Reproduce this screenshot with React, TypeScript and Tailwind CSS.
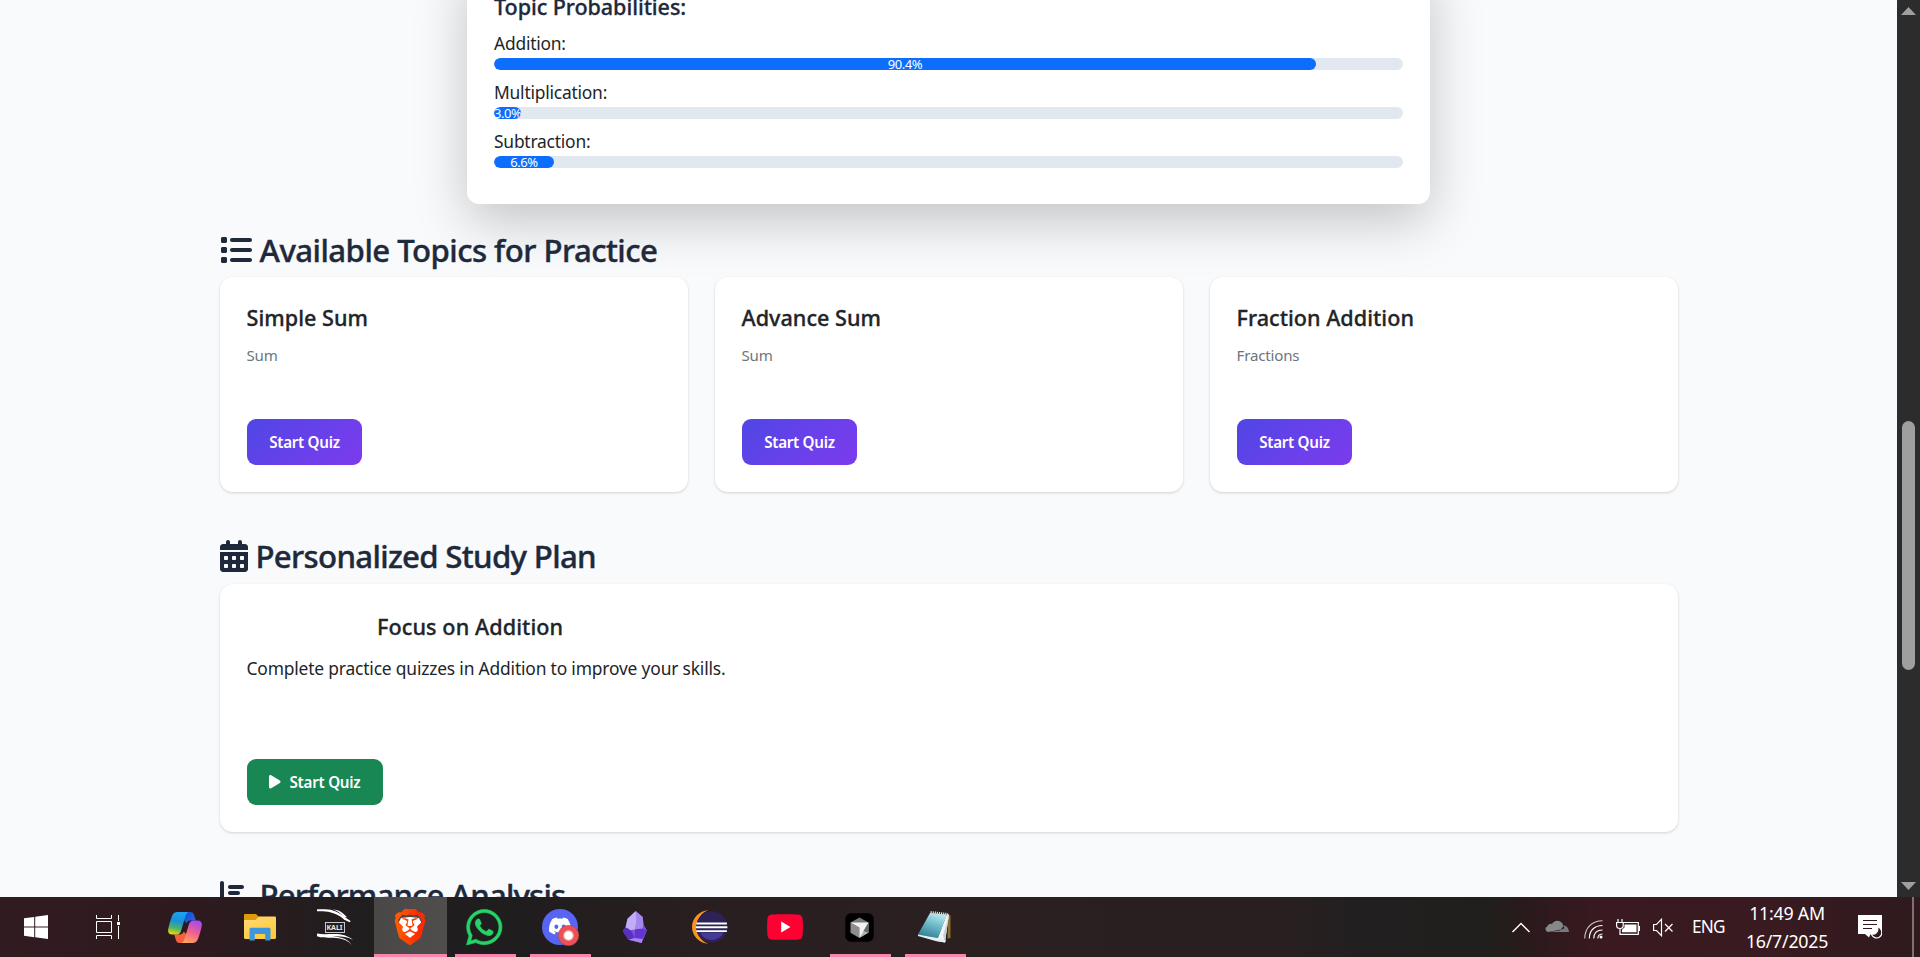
import type { ReactNode } from "react";
import { SiBrave, SiDiscord } from "react-icons/si";
import {
  FaCalendarDays,
  FaChartBar,
  FaList,
  FaPlay,
  FaWhatsapp,
} from "react-icons/fa6";

const probabilities = [
  { label: "Addition:", value: 90.4 },
  { label: "Multiplication:", value: 3.0 },
  { label: "Subtraction:", value: 6.6 },
];

const topics = [
  { title: "Simple Sum", subject: "Sum" },
  { title: "Advance Sum", subject: "Sum" },
  { title: "Fraction Addition", subject: "Fractions" },
];

function SectionHeading({ icon, children, className = "" }: { icon: ReactNode; children: string; className?: string }) {
  return (
    <h2 className={`flex h-10 items-center text-[31.2px] leading-10 font-medium whitespace-nowrap text-[#1e293b] ${className}`}>
      {icon}
      <span className="[-webkit-text-stroke:0.4px_#1e293b]">{children}</span>
    </h2>
  );
}

function ProbabilityCard() {
  return (
    <section className="mx-auto -mt-10 h-[244px] w-[963px] shrink-0 rounded-xl bg-white px-[27px] pt-[33px] shadow-[0_17px_53px_rgba(0,0,0,0.22)]">
      <h4 className="text-[21.6px] leading-[27px] font-medium tracking-[-0.004em] text-[#1e293b] [-webkit-text-stroke:0.3px_#1e293b]">
        Topic Probabilities:
      </h4>
      <div className="pt-2.5">
        {probabilities.map(({ label, value }) => (
          <div key={label} className="h-[49.2px]">
            <p className="h-7 text-[17.4px] leading-[26.8px] tracking-[-0.012em] text-[#212529]">{label}</p>
            <div className="h-[11.7px] overflow-hidden rounded-full bg-[#e2e8f0]">
              <div
                className="flex h-full items-center justify-center overflow-hidden rounded-full bg-[#0d6efd] pt-px text-[13px] leading-none tracking-[-0.035em] text-white"
                style={{ width: `${value}%` }}
              >
                {value.toFixed(1)}%
              </div>
            </div>
          </div>
        ))}
      </div>
    </section>
  );
}

function TopicCard({ title, subject }: { title: string; subject: string }) {
  return (
    <article className="h-[215px] rounded-[13px] bg-white px-[27px] pt-[27.5px] shadow-[0_1px_3px_rgba(0,0,0,0.16)]">
      <h5 className="text-[21.6px] leading-[26px] font-medium tracking-[0.001em] text-[#212529] [-webkit-text-stroke:0.3px_#212529]">{title}</h5>
      <p className="mt-[13px] text-[15.1px] leading-[23px] tracking-[-0.012em] text-[#6c757d]">{subject}</p>
      <button className="mt-[52.5px] block h-[46px] w-[115px] rounded-[9px] bg-linear-135 from-[#4f46e5] to-[#7c3aed] pl-px text-[15.2px] font-semibold tracking-[-0.018em] text-white">
        Start Quiz
      </button>
    </article>
  );
}

function StudyPlanCard() {
  return (
    <article className="h-[248px] rounded-[13px] bg-white px-[27px] pt-[29.5px] shadow-[0_1px_3px_rgba(0,0,0,0.16)]">
      <h5 className="pl-[130.5px] text-[21.6px] leading-[26px] font-medium tracking-[0.004em] text-[#212529] [-webkit-text-stroke:0.3px_#212529]">
        Focus on Addition
      </h5>
      <p className="mt-[15.5px] text-[17.4px] leading-[26px] tracking-[-0.01em] text-[#212529]">
        Complete practice quizzes in Addition to improve your skills.
      </p>
      <button className="mt-[78px] flex h-[46px] w-[136px] items-center rounded-[9px] bg-[#198754] pl-[21px] text-[15.2px] font-semibold tracking-[-0.016em] text-white">
        <FaPlay className="mr-[8.5px] h-[15.4px] w-[13.5px]" />
        Start Quiz
      </button>
    </article>
  );
}

function Scrollbar() {
  return (
    <div className="flex w-[23px] shrink-0 flex-col items-center bg-[#2c2c2c]">
      <svg className="mt-[7px] h-2 w-[15px]" viewBox="0 0 15 8">
        <path d="M7.5 0L15 8H0z" fill="#9f9f9f" />
      </svg>
      <div className="mt-[406px] h-[249px] w-[13px] rounded-full bg-[#9f9f9f]" />
      <svg className="mt-[212px] h-2 w-[15px]" viewBox="0 0 15 8">
        <path d="M0 0H15L7.5 8z" fill="#9f9f9f" />
      </svg>
    </div>
  );
}

function WindowsIcon() {
  return (
    <svg className="size-6" viewBox="0 0 24 24" fill="#fff">
      <path d="M0 3.3L10.2 1.9V11.4H0zM11.2 1.7L24 0V11.4H11.2zM0 12.4H10.2V22.2L0 20.8zM11.2 12.4H24V24L11.2 22.3z" />
    </svg>
  );
}

function TaskViewIcon() {
  return (
    <svg className="h-6 w-[25px]" viewBox="0 0 25 24" fill="none" stroke="#fff">
      <path d="M.5 6.5h15v11H.5zM.5 0v3.5h15V0M.5 24v-3.5h15V24M22.5 0v6M22.5 11v13" />
      <path d="M21 7h3v3h-3z" fill="#fff" stroke="none" />
    </svg>
  );
}

function CopilotIcon() {
  return (
    <svg className="h-[31px] w-[34px]" viewBox="0 0 34 31">
      <defs>
        <linearGradient id="cpA" x1="0.5" y1="0" x2="0.3" y2="1">
          <stop offset="0" stopColor="#18a4f0" />
          <stop offset="0.4" stopColor="#1d8fd8" />
          <stop offset="0.72" stopColor="#4cb56a" />
          <stop offset="1" stopColor="#f5d800" />
        </linearGradient>
        <linearGradient id="cpB" x1="0.7" y1="0" x2="0.3" y2="1">
          <stop offset="0" stopColor="#a44af0" />
          <stop offset="0.5" stopColor="#f0608f" />
          <stop offset="1" stopColor="#ffa45a" />
        </linearGradient>
        <linearGradient id="cpC" x1="0" y1="0" x2="1" y2="1">
          <stop offset="0" stopColor="#0f49c8" />
          <stop offset="1" stopColor="#2d6df0" />
        </linearGradient>
      </defs>
      <path d="M17 0h5.5c2 0 3 1.200 3.600 3l1.700 5.600h-5.600c-2 0-3.200 1-3.800 3L16 8z" fill="url(#cpC)" />
      <path d="M17 31h-5.500c-2 0-3-1.200-3.600-3l-1.700-5.600h5c2.600 0 3.800-1 4.600-3L19 23z" fill="#f2603e" />
      <path d="M9.500 0H21c-2 .4-2.900 2-3.600 4.300l-4.300 14.400c-.8 2.500-2.400 3.900-5 3.900H4.200C.8 22.600-.4 20 .3 16.800 1.500 11.500 3 6 4.500 3 5.500 1 7 0 9.500 0z" fill="url(#cpA)" />
      <path d="M24.500 31H13c2-.4 2.900-2 3.600-4.300l4.300-14.400c.8-2.500 2.400-3.900 5-3.900h3.900c3.400 0 4.600 2.600 3.900 5.800C32.500 19.500 31 25 29.500 28c-1 2-2.500 3-5 3z" fill="url(#cpB)" />
    </svg>
  );
}

function ExplorerIcon() {
  return (
    <svg className="h-[27px] w-8" viewBox="0 0 32 27">
      <defs>
        <linearGradient id="folder" x1="0" y1="0" x2="0.6" y2="1">
          <stop offset="0" stopColor="#ffdb73" />
          <stop offset="1" stopColor="#fdc93f" />
        </linearGradient>
      </defs>
      <path d="M0 1.200C0 .5.500 0 1.200 0H12l3 3-3.500 4H0z" fill="#dc9a0c" />
      <path d="M0 6h11.500L14.800 2.500H30.800c.7 0 1.200.5 1.200 1.200V23.800c0 .7-.5 1.200-1.200 1.200H1.200C.5 25 0 24.500 0 23.800z" fill="url(#folder)" />
      <path d="M5.500 26.500V15.500c0-1.100.6-1.700 1.700-1.700H24.800c1.100 0 1.700.6 1.700 1.700v11h-5.300V20H10.800v6.500z" fill="#3b96dc" />
    </svg>
  );
}

function KaliIcon() {
  return (
    <div className="relative flex h-9 w-9 items-center justify-center">
      <svg className="absolute inset-0 size-9" viewBox="0 0 36 36" fill="#fff">
        <path d="M0 .2C8 .2 12 0 16 1.400c5 1.600 8.500 4 11.500 6.600l3.500 2.200 2.600 1.700-.8 1.300-5.600-2.400C24 7.800 20.500 5.500 14 3.600 8.500 2 4 2.300 0 2.300z" />
        <path d="M14.500.3c5 .5 9.500 4.300 12.500 8.200l3-.2C26.500 3.800 20.500.2 14.500.3z" />
        <path d="M0 24.500c5 1 10 .6 16 .5 8.500-.2 14.500 1.500 20 5.700-6.500-3-12.500-3.600-20-3.300 9 .300 15.500 3.100 19 8.600-5.500-5.500-11-6.800-19-7.200C9 28.500 4.500 29 0 27.300z" />
      </svg>
      <span className="flex h-[11px] w-5 items-center justify-center border border-[#c8c8c8] text-[7px] leading-none font-bold text-[#e8e8e8]">KALI</span>
    </div>
  );
}

function BraveIcon() {
  return (
    <span className="flex text-[36px]">
      <svg width="0" height="0" className="absolute">
        <linearGradient id="braveFill" x1="0" y1="0" x2="1" y2="0">
          <stop offset="0.1" stopColor="#ff5a00" />
          <stop offset="0.8" stopColor="#fb2a05" />
        </linearGradient>
      </svg>
      <span className="relative flex">
        <svg className="absolute inset-0 size-9" viewBox="0 0 36 36">
          <path d="M9 9l9-1 9 1 2.500 5-3 11L18 31l-8.500-6-3-11z" fill="#fff" />
        </svg>
        <SiBrave className="relative" fill="url(#braveFill)" />
      </span>
    </span>
  );
}

function DiscordIcon() {
  return (
    <span className="relative flex size-9 items-center justify-center rounded-full bg-[#5865f2]">
      <SiDiscord className="mb-0.5 size-[22px] text-white" />
      <svg className="absolute top-4 left-4 size-[21px]" viewBox="0 0 21 21">
        <circle cx="10.500" cy="10.500" r="10.300" fill="#ed5056" stroke="#a8444a" strokeWidth=".5" />
        <circle cx="10.500" cy="10.500" r="5.400" fill="#f3a0a3" />
        <circle cx="10.500" cy="10.500" r="4.300" fill="#fff" />
      </svg>
    </span>
  );
}

function ObsidianIcon() {
  return (
    <svg className="h-8 w-[25px]" viewBox="0 0 25 32">
      <path d="M13.700 0L20.700 6 21.500 13.500 25 19.500 19.700 32 6.500 28.700.7 20 3.500 16.500 5.500 7.700z" fill="#7b50dc" />
      <path d="M13.700 0L5.500 7.700 3.500 16.500 6 19.500l7-1L15 9z" fill="#c3acf6" />
      <path d="M13.700 0l7 6 .8 7.500-2 6L13 18.500 14.500 9z" fill="#a586ee" />
      <path d="M3.500 16.500c4 1 8 4.500 8.500 12L6.500 28.700.7 20z" fill="#5a2fc0" />
      <path d="M13 18.500c4.500-1 8-1 12 1l-5 8.500-7.500-.5c.2-3 .8-6 .5-9z" fill="#6335cf" />
      <path d="M6.500 28.700L12.500 27l8 1-.8 4z" fill="#a586ee" />
    </svg>
  );
}

function EclipseIcon() {
  return (
    <svg className="h-[34px] w-9" viewBox="0 0 36 34">
      <path d="M16.500 0C7 1 0 8 0 17s7 16 16.500 17C9 31 5 25 5 17S9 3 16.500 0z" fill="#f7941e" />
      <circle cx="19.700" cy="17" r="15.700" fill="#2c2255" />
      <path d="M8 22.500h23.500a13 13 0 0 1-23.500 0z" fill="#453a96" />
      <path d="M4.300 12.500h30.600v1.900H4.300zM3.900 16.300h31.500v1.900H3.900zM4.300 20.200h30.600v1.900H4.300z" fill="#fff" />
    </svg>
  );
}

function YoutubeIcon() {
  return (
    <svg className="h-[26px] w-9" viewBox="0 0 36 26">
      <path d="M4.500.6C12 0 24 0 31.500.6 34 .9 35.200 2.300 35.500 4.500c.6 5.500.6 11.500 0 17-.3 2.200-1.500 3.600-4 3.900-7.500.6-19.500.6-27 0-2.500-.3-3.700-1.700-4-3.900-.6-5.500-.6-11.500 0-17C.8 2.300 2 .9 4.500.6z" fill="#ff0033" />
      <path d="M14.200 7.500L23.500 13l-9.300 5.500z" fill="#fff" />
    </svg>
  );
}

function CursorIcon() {
  return (
    <svg className="size-[29px]" viewBox="0 0 29 29">
      <rect x=".3" y=".3" width="28.400" height="28.400" rx="5.500" fill="#000" />
      <path d="M14.500 4.500L23.500 9.500 14.500 14.500 5.500 9.500z" fill="#777" />
      <path d="M5.500 9.500L14.500 14.500V25L5.500 19.800z" fill="#8d8d8d" />
      <path d="M23.500 9.500V19.800L14.500 25V14.500z" fill="#b4b4b4" />
      <path d="M5.500 9.500H23.500L14.500 25V14.500z" fill="#f2f2f2" />
      <path d="M20.500 14.500l3-5v10.300l-5-1.800z" fill="#6a6a6a" />
    </svg>
  );
}

function NotepadIcon() {
  return (
    <svg className="h-8 w-[34px]" viewBox="0 0 34 32">
      <defs>
        <linearGradient id="cover" x1="0.7" y1="0" x2="0.3" y2="1">
          <stop offset="0" stopColor="#bfe9ee" />
          <stop offset="0.45" stopColor="#6fbccb" />
          <stop offset="1" stopColor="#2f7d92" />
        </linearGradient>
      </defs>
      <path d="M30 4l2.500.5V27l-3 .5z" fill="#8a6d33" />
      <path d="M29 3l2 .5L27 31.500 18.500 30z" fill="#f1f5f6" />
      <path d="M30.500 6L27 31.500l-2-7z" fill="#c7d0d3" />
      <path d="M12 2L29 3.500 20 27 0 23.500z" fill="url(#cover)" />
      <path d="M0 23.500L20 27l8 2.500-1 2-9.500-1.500L0 25z" fill="#e3eef0" />
      <path d="M12.500 1.500L30 3.500" stroke="#d5d8da" strokeWidth="3" strokeDasharray="1.200 .9" />
    </svg>
  );
}

const apps: { name: string; icon: ReactNode; state?: "open" | "active" }[] = [
  { name: "copilot", icon: <CopilotIcon /> },
  { name: "explorer", icon: <ExplorerIcon /> },
  { name: "kali", icon: <KaliIcon /> },
  { name: "brave", icon: <BraveIcon />, state: "active" },
  { name: "whatsapp", icon: <FaWhatsapp className="size-[40.5px] text-[#25d366]" stroke="currentColor" strokeWidth={8} />, state: "open" },
  { name: "discord", icon: <DiscordIcon />, state: "open" },
  { name: "obsidian", icon: <ObsidianIcon /> },
  { name: "eclipse", icon: <EclipseIcon /> },
  { name: "youtube", icon: <YoutubeIcon /> },
  { name: "cursor", icon: <CursorIcon />, state: "open" },
  { name: "notepad", icon: <NotepadIcon />, state: "open" },
];

function TrayIcons() {
  return (
    <>
      <svg className="h-[11px] w-[18px]" viewBox="0 0 18 11" fill="none" stroke="#fff" strokeWidth="1.400">
        <path d="M.5 10L9 1.500 17.500 10" />
      </svg>
      <svg className="mb-[3px] ml-[15px] h-3 w-6" viewBox="0 0 24 12">
        <path d="M3 12a3 3 0 0 1-.5-5.800C3 4.500 5 3.500 7 4 8.500.5 14-.8 17 3c.8.900 1.200 2 1.300 3L16 9.500z" fill="#85898c" />
        <path d="M18.500 5.500c3 0 5.200 2.500 5.500 6.500H3.500L15 10.500z" fill="#75797c" />
        <path d="M16 10l2.500-4 .8 2.200z" fill="#2b1519" />
      </svg>
      <svg className="mt-1 ml-[15px] h-[19px] w-[19px]" viewBox="0 0 19 19" fill="none" stroke="#fff" strokeWidth="1.100">
        <path d="M.8 18.500C.8 8 8 .8 18.500.8" strokeOpacity=".75" />
        <path d="M5.300 18.500C5.300 10.500 10.500 5.500 18.500 5.500M9.800 18.500c0-5.500 3.400-8.500 8.700-8.500M13.800 18.500c.1-2.700 1.700-4.400 4.700-4.500" />
        <circle cx="17" cy="17" r="1.500" fill="#fff" stroke="none" />
      </svg>
      <svg className="ml-[13px] h-4 w-6" viewBox="0 0 24 16" fill="none" stroke="#fff" strokeWidth="1.200">
        <path d="M7 3.500H22.300V15.300H4V10M2 0v3.500M6 0v3.500M.6 3.500H7.200V6.500C7.200 8.500 6 9.500 4 9.500S.6 8.500.6 6.500z" />
        <path d="M8.500 5.500H20.500v7.800H6V10.500l2.500-2z" fill="#fff" stroke="none" />
        <path d="M23.500 7v5" />
      </svg>
      <svg className="ml-[13px] h-[19px] w-5" viewBox="0 0 20 19" fill="none" stroke="#fff" strokeWidth="1.200">
        <path d="M.6 6.500H3.500L8.500 1.300V17.700L3.500 12.500H.6z" />
        <path d="M12 6l7.500 7.500M19.500 6L12 13.500" />
      </svg>
    </>
  );
}

function NotificationIcon() {
  return (
    <svg className="h-6 w-6" viewBox="0 0 24 24">
      <path d="M0 0H24V19H12.500L11 22.500 7 19H0z" fill="#fff" />
      <path d="M5 5.500H19M5 9.500H19M5 13.500H14" stroke="#2f191d" strokeWidth="1.200" />
      <path d="M19.500 11.500c1.500 5-2 8.500-6.500 7.500 2 3.500 5.500 5 8.300 3.300 3.700-2.300 3.400-8.600-1.800-10.800z" fill="#2f191d" stroke="#fff" strokeWidth="1.200" />
    </svg>
  );
}

function Taskbar() {
  return (
    <footer className="flex h-[60px] shrink-0 overflow-hidden bg-linear-[90deg,#311b20_0%,#2e1a1e_10%,#201e1e_19%,#201d1e_27%,#2a1f20_38%,#2b1f20_50%,#2a1f20_66%,#221f20_71%,#211f1d_77.5%,#2a1a1c_79.5%,#3a1920_83.5%,#391a20_92%,#2f1a1e_100%]">
      <div className="flex w-[72px] items-center justify-center">
        <WindowsIcon />
      </div>
      <div className="flex w-[76px] items-center justify-center pr-[3px]">
        <TaskViewIcon />
      </div>
      {apps.map(({ name, icon, state }) => (
        <div key={name} className={`flex w-[75px] flex-col items-center ${state === "active" ? "bg-linear-to-r from-[#4a4747] to-[#504d4d] bg-size-[73px_100%] bg-position-[1px_0] bg-no-repeat" : ""}`}>
          <div className="flex h-[57px] items-center justify-center pt-[3px] pr-0.5">{icon}</div>
          {state && <div className={`h-[3px] bg-[#f985ae] ${state === "active" ? "w-[73px]" : "w-[61px]"}`} />}
        </div>
      ))}
      <div className="ml-auto flex items-center">
        <TrayIcons />
        <span className="ml-[19px] w-[34px] text-[17.200px] tracking-[-0.045em] text-white">ENG</span>
        <div className="ml-[19px] w-[84px] text-center text-[17.8px] leading-7 tracking-[-0.014em] whitespace-nowrap text-white">
          <p>11:49 AM</p>
          <p>16/7/2025</p>
        </div>
        <div className="ml-[29px] flex">
          <NotificationIcon />
        </div>
        <div className="mr-1.5 ml-[30px] h-[60px] w-0.5 bg-[#806f73]" />
      </div>
    </footer>
  );
}

export default function App() {
  return (
    <div className="flex h-[957px] w-[1920px] flex-col overflow-hidden font-['Noto_Sans',sans-serif]">
      <div className="flex h-[897px] shrink-0 overflow-hidden">
        <main className="flex h-[897px] w-[1897px] flex-col overflow-hidden bg-[#f8fafc]">
          <ProbabilityCard />
          <div className="mx-auto mt-[26px] w-[1458px] shrink-0">
            <SectionHeading className="mb-[7px] gap-2 tracking-[-0.0175em]" icon={<FaList className="size-8" />}>
              Available Topics for Practice
            </SectionHeading>
            <div className="grid grid-cols-3 gap-[27px]">
              {topics.map((topic) => (
                <TopicCard key={topic.title} {...topic} />
              ))}
            </div>
            <SectionHeading className="mt-11 mb-2 gap-2 tracking-[-0.022em]" icon={<FaCalendarDays className="h-8 w-7" />}>
              Personalized Study Plan
            </SectionHeading>
            <StudyPlanCard />
            <SectionHeading className="mt-[43px] gap-2 tracking-[-0.028em]" icon={<FaChartBar className="size-8" />}>
              Performance Analysis
            </SectionHeading>
          </div>
        </main>
        <Scrollbar />
      </div>
      <Taskbar />
    </div>
  );
}
